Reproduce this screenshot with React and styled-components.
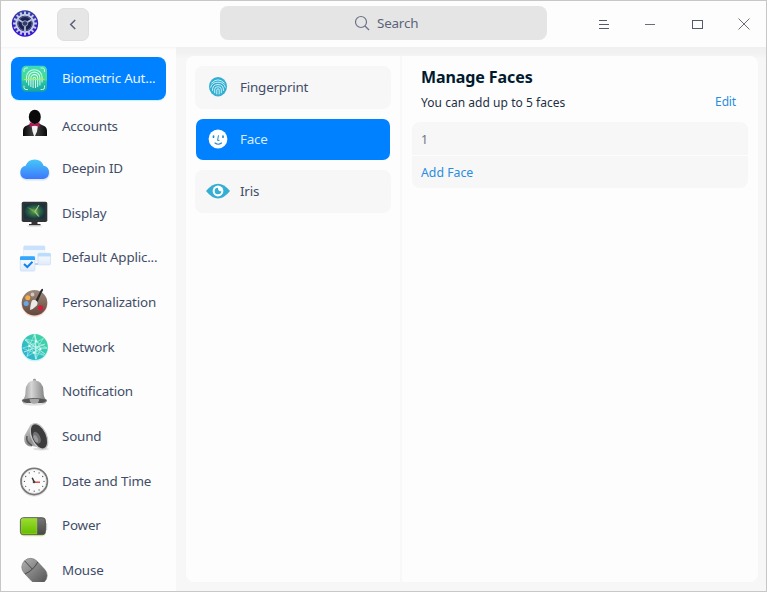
import React from 'react';
import styled, { createGlobalStyle, css } from 'styled-components';

const GlobalStyle = createGlobalStyle`
  * { box-sizing: border-box; }
  body { margin: 0; background: #fdfdfd; }
`;

const Window = styled.div`
  width: 767px;
  height: 592px;
  border: 1px solid #c8c7c8;
  background: #fdfdfd;
  display: flex;
  flex-direction: column;
  overflow: hidden;
  font-family: 'Noto Sans', sans-serif;
  font-size: 13.4px;
  letter-spacing: -0.19px;
  color: #414d68;
`;

const TitleBar = styled.header`
  height: 46px;
  flex: none;
  display: flex;
  align-items: flex-start;
  padding-left: 9px;
`;

const Logo = styled.svg`
  width: 30px;
  height: 30px;
  margin-top: 8px;
  flex: none;
`;

const BackButton = styled.button`
  width: 32px;
  height: 33px;
  margin: 7px 0 0 17px;
  padding: 0;
  border: 1px solid #dfdfdf;
  border-radius: 7px;
  background: #e6e6e6;
  display: flex;
  align-items: center;
  justify-content: center;
`;

const SearchBox = styled.div`
  width: 327px;
  height: 34px;
  margin: 5px 0 0 131px;
  border-radius: 8px;
  background: #e5e5e5;
  display: flex;
  align-items: center;
  padding-left: 134px;
  gap: 7px;
  color: #5a6379;
`;

const Controls = styled.div`
  display: flex;
  gap: 26.7px;
  margin: 13px 0 0 46.7px;

  svg { width: 20px; height: 20px; display: block; }
`;

const Body = styled.div`
  flex: 1;
  min-height: 0;
  display: flex;
`;

const Sidebar = styled.nav`
  width: 175px;
  flex: none;
  padding: 10px 10px 0;
  margin-bottom: 9px;
  overflow: hidden;
  box-shadow: inset 0 3px 3px -2px #f3f3f3;
`;

const NavItem = styled.div`
  height: ${(p) => p.$height || 44.7}px;
  margin-bottom: ${(p) => p.$after || 0}px;
  padding-left: 6px;
  display: flex;
  align-items: center;
  white-space: nowrap;
  border-radius: 8px;
  ${(p) => p.$active && css`
    width: 155px;
    background: #0081ff;
    color: #e9f4ff;
    box-shadow: 0 1px 1px #c3f3ff;
  `}

  svg { width: 36px; height: 36px; flex: none; margin-right: 9px; }
`;

const NavLabel = styled.span`
  padding-bottom: 1.4px;
`;

const Content = styled.main`
  flex: 1;
  background: linear-gradient(#f0f0f0, #f2f2f2 7px, #f7f7f7 12px);
  padding: 9px 9px 9px 10px;
`;

const Panel = styled.div`
  height: 526px;
  display: flex;
  background: #fdfdfd;
  border-radius: 8px;
`;

const MethodList = styled.div`
  width: 216px;
  flex: none;
  border-right: 2px solid #f8f8f8;
  padding: 10px 9px;
  display: flex;
  flex-direction: column;
  gap: 9.5px;
`;

const Method = styled.div`
  height: 42.6px;
  width: 196px;
  display: flex;
  align-items: center;
  padding-left: 10px;
  gap: 9px;
  border-radius: 8px;
  background: #f7f7f7;
  ${(p) => p.$active && css`
    background: #0081ff;
    background-clip: padding-box;
    border: 1px solid transparent;
    padding-left: 9px;
    color: #d9ecff;
  `}

  svg { width: 26px; height: 26px; flex: none; }
`;

const Details = styled.section`
  flex: 1;
  padding: 10px 10px 0 10px;
`;

const Title = styled.h1`
  margin: 0 0 0 9px;
  font-size: 16px;
  line-height: 22px;
  font-weight: 700;
  letter-spacing: -0.09px;
  color: #001a2e;
`;

const SubHeader = styled.div`
  display: flex;
  justify-content: space-between;
  align-items: baseline;
  padding: 0 12px 0 9px;
  margin-top: 6px;
  height: 28px;
  line-height: 18px;
  font-size: 12px;
  letter-spacing: 0.04px;
  color: #1d2f44;
`;

const Link = styled.span`
  color: #2a8de0;
`;

const EditLink = styled(Link)`
  margin-bottom: 1px;
  align-self: flex-start;
  line-height: 16px;
  letter-spacing: -0.15px;
`;

const FaceList = styled.div`
  display: flex;
  flex-direction: column;
  gap: 1px;
  width: 336px;
  border-radius: 8px;
  overflow: hidden;
`;

const FaceRow = styled.div`
  height: ${(p) => p.$height}px;
  padding: 1.5px 9px 0;
  display: flex;
  align-items: center;
  background: #f7f7f7;
  font-size: 12.3px;
  letter-spacing: 0;
  color: #6b7386;
`;

const polar = (cx, cy, r, deg) => [
  cx + r * Math.cos((deg * Math.PI) / 180),
  cy + r * Math.sin((deg * Math.PI) / 180),
];

const GearLogo = () => (
  <Logo viewBox="0 0 30 30">
    <defs>
      <linearGradient id="gearBg" x1="0" y1="0" x2="0" y2="1">
        <stop offset="0" stopColor="#3340a0" />
        <stop offset="1" stopColor="#3a10d8" />
      </linearGradient>
    </defs>
    <circle cx="15" cy="14.5" r="13.2" fill="url(#gearBg)" />
    {Array.from({ length: 16 }, (_, i) => (
      <rect key={i} x="14" y="2.6" width="2" height="4" fill="#c5cce6" transform={`rotate(${i * 22.5} 15 14.5)`} />
    ))}
    <circle cx="15" cy="14.5" r="8.7" fill="#1d2350" stroke="#c5cce6" strokeWidth="2" />
    <circle cx="15" cy="14.5" r="7" fill="none" stroke="#5961a0" strokeWidth="1" />
    {[0, 120, 240].map((a) => (
      <path key={a} d="M15 14.5v8" stroke="#b8bfdd" strokeWidth="1.7" transform={`rotate(${a} 15 14.5)`} />
    ))}
    <circle cx="15" cy="14.5" r="2.7" fill="#343b66" stroke="#9ca4cb" strokeWidth="1" />
  </Logo>
);

const BiometricIcon = () => (
  <svg viewBox="0 0 36 36" fill="none" strokeLinecap="round">
    <defs>
      <linearGradient id="bioBg" x1="0" y1="0" x2="0" y2="1">
        <stop offset="0" stopColor="#3ddbb6" />
        <stop offset=".55" stopColor="#4ed98d" />
        <stop offset=".58" stopColor="#2fc4a2" />
        <stop offset="1" stopColor="#16a5a1" />
      </linearGradient>
    </defs>
    <rect x="4.5" y="4.8" width="25.5" height="26" rx="4.5" fill="url(#bioBg)" />
    <path d="M7 10.5V9q0-2 2-2h1.5M24 7h1.5q2 0 2 2v1.5M7 25v1.5q0 2 2 2h1.5M24 28.500h1.500q2 0 2-2V25" stroke="#c9f7e9" />
    <path d="M9.500 21v-4.500a7.800 7.800 0 0 1 15.600 0V21M11.700 24v-7.300a5.600 5.600 0 0 1 11.200 0V24M13.900 25.500v-8.500a3.400 3.400 0 0 1 6.800 0v8.500M16.100 26.500v-9a1.200 1.200 0 0 1 2.400 0v9" stroke="#d5faea" strokeWidth="1.05" />
    <path d="M7.500 18.500h19.500" stroke="#a5ef68" strokeWidth=".9" />
  </svg>
);

const AccountsIcon = () => (
  <svg viewBox="0 0 36 36">
    <defs>
      <linearGradient id="suit" x1="0" y1="0" x2="1" y2="0">
        <stop offset="0" stopColor="#050505" />
        <stop offset=".35" stopColor="#3a3a3a" />
        <stop offset=".65" stopColor="#333" />
        <stop offset="1" stopColor="#080808" />
      </linearGradient>
    </defs>
    <path d="M6 27v-5q0-4.500 4-5.500l4-2h8l4 2q4 1 4 5.500v5z" fill="url(#suit)" />
    <path d="M14.500 16.500h6.500l-1 6-2 4.500h-1l-1.500-4.500z" fill="#f3f0f1" />
    <ellipse cx="17.800" cy="7.900" rx="6" ry="7.200" fill="#090909" />
    <path d="M12.700 13.300l5 1.900 4.800-1.900v4.700l-4.800-1.500-5 1.500z" fill="#b71557" />
  </svg>
);

const CloudIcon = () => (
  <svg viewBox="0 0 36 36">
    <defs>
      <linearGradient id="cloud" x1="0" y1="0" x2="0" y2="1">
        <stop offset="0" stopColor="#45c8f8" />
        <stop offset="1" stopColor="#3d78fb" />
      </linearGradient>
    </defs>
    <path d="M9 29.500a7 7 0 0 1-.5-13.800 9.800 9.800 0 0 1 18.300-.4 7.200 7.200 0 0 1 .2 14.200z" fill="#bdd8ff" opacity=".6" />
    <path d="M9 27.900a6.700 6.700 0 0 1-.3-13.200 9.500 9.500 0 0 1 17.900 0 6.700 6.700 0 0 1-.3 13.200z" fill="url(#cloud)" />
  </svg>
);

const DisplayIcon = () => (
  <svg viewBox="0 0 36 36">
    <defs>
      <radialGradient id="screen">
        <stop offset="0" stopColor="#5fa04d" />
        <stop offset=".6" stopColor="#2a6148" />
        <stop offset="1" stopColor="#19343f" />
      </radialGradient>
    </defs>
    <rect x="4.700" y="6.700" width="25.600" height="20.300" rx="1.800" fill="#303434" />
    <rect x="7" y="8.800" width="21" height="15.200" fill="url(#screen)" />
    <path d="M10 12l8 3 4-5-2 6 3 6-5.500-4z" fill="#82b84c" opacity=".6" />
    <path d="M22 10l-4 6.500 3.500 5" fill="none" stroke="#b5d29a" strokeWidth=".9" />
    <path d="M14.500 27h6v2h3v1.300H12V29h2.500z" fill="#343434" />
    <ellipse cx="17.500" cy="31" rx="8" ry=".7" fill="#bbb" opacity=".5" />
  </svg>
);

const DefaultAppsIcon = () => (
  <svg viewBox="0 0 36 36">
    <defs>
      <linearGradient id="paper" x1="0" y1="0" x2="0" y2="1">
        <stop offset="0" stopColor="#fbfdff" />
        <stop offset="1" stopColor="#dfebfa" />
      </linearGradient>
    </defs>
    <rect x="6.500" y="6" width="21.500" height="15" rx="1.200" fill="#f3f8ff" stroke="#e2edfb" strokeWidth=".6" />
    <path d="M6.500 10V7q0-1.200 1.200-1.200h19q1.300 0 1.300 1.200v3z" fill="#c9e1fb" />
    <path d="M18 24h3.500" stroke="#a8c3e2" strokeWidth="1.500" />
    <rect x="21" y="13.300" width="12.500" height="11.500" rx="1.200" fill="url(#paper)" stroke="#cfdff2" strokeWidth=".8" />
    <path d="M20.700 16.500v-2q0-1.500 1.300-1.500h10.500q1.300 0 1.300 1.500v2z" fill="#bcdcfc" />
    <rect x="3.300" y="16.500" width="14.500" height="14.500" rx="1" fill="url(#paper)" stroke="#c8dff8" strokeWidth=".8" />
    <path d="M3 20v-2.500q0-1.200 1.200-1.200h12.500q1.300 0 1.300 1.200V20z" fill="#35a7fb" />
    <path d="M7 24l3.300 3 5.200-5.300" fill="none" stroke="#1681ed" strokeWidth="2" />
  </svg>
);

const PaletteIcon = () => (
  <svg viewBox="0 0 36 36">
    <defs>
      <linearGradient id="wood" x1="0" y1="0" x2="0" y2="1">
        <stop offset="0" stopColor="#a08a7c" />
        <stop offset="1" stopColor="#62473c" />
      </linearGradient>
    </defs>
    <circle cx="17.500" cy="19" r="13" fill="#ffb9a5" opacity=".55" />
    <circle cx="17.500" cy="17.700" r="12.800" fill="url(#wood)" />
    <circle cx="15.500" cy="9.500" r="1.900" fill="#d1c7c0" />
    <circle cx="10.800" cy="12.700" r="2.500" fill="#f0ae45" />
    <circle cx="9.200" cy="18.500" r="2.500" fill="#68a8e7" />
    <circle cx="23.500" cy="22.800" r="2.600" fill="#d51b37" />
    <path d="M18.500 15.500L23.500 5.500q1.500-2.500 2.500-1.200.5 1-1 2.800L20.500 17z" fill="#2b2b2b" />
    <path d="M15 15.500q3-1.800 5.200 1.300 1.200 2.700-1.500 4.700-2 2.300-5.700 3.500.5-6.500 2-9.500z" fill="#ede9e5" />
  </svg>
);

const NetworkIcon = () => {
  const outer = [5, 42, 85, 130, 175, 220, 268, 315].map((d) => polar(17.8, 18, 12.3, d));
  const inner = [20, 100, 190, 280].map((d) => polar(18, 18, 5.8, d));
  return (
    <svg viewBox="0 0 36 36">
      <defs>
        <linearGradient id="globe" x1="1" y1="0" x2="0" y2="1">
          <stop offset="0" stopColor="#45dc9a" />
          <stop offset="1" stopColor="#25acd8" />
        </linearGradient>
      </defs>
      <circle cx="17.800" cy="19" r="13.400" fill="#a4edf2" opacity=".55" />
      <circle cx="17.800" cy="18" r="13" fill="url(#globe)" />
      <g stroke="#dcfff5" strokeWidth=".55" opacity=".85">
        {outer.map(([x, y], i) => inner.map(([a, b], j) => (
          (i + j) % 3 !== 1 && <line key={`${i}-${j}`} x1={x} y1={y} x2={a} y2={b} />
        )))}
        <path d="M18 5l1 25M7 23l21-8M8 11l20 14" fill="none" strokeWidth=".9" />
      </g>
      {inner.map(([x, y]) => <circle key={x} cx={x} cy={y} r="1.1" fill="#edfff9" />)}
    </svg>
  );
};

const BellIcon = () => (
  <svg viewBox="0 0 36 36">
    <defs>
      <linearGradient id="bell" x1="0" y1="0" x2="1" y2="0">
        <stop offset="0" stopColor="#8a8a8a" />
        <stop offset=".38" stopColor="#d6d6d6" />
        <stop offset="1" stopColor="#757575" />
      </linearGradient>
    </defs>
    <ellipse cx="17.300" cy="29.500" rx="11.500" ry="2" fill="#ccc" opacity=".6" />
    <rect x="16" y="4.700" width="3" height="3" rx="1.200" fill="#999" />
    <path d="M5 26.500q3.500-2.500 3.500-9Q8.500 7 17.400 6.300 26.500 7 26.500 17.500q0 6.500 3.300 9-1 2.500-5 2.500H10q-4 0-5-2.500z" fill="url(#bell)" />
    <path d="M5 25.800q12-3.500 24.800 0 0 3.200-3.800 3.200H9q-4 0-4-3.200z" fill="#555" />
    <path d="M12.500 25.200q5-1 9.800 0-.5 4.500-5 4.500-4.300 0-4.800-4.500z" fill="#a7a7a7" />
    <path d="M5.300 26.500q1 2.500 4 2.700M29.500 26.500q-1 2.500-4 2.700" fill="none" stroke="#aaa" strokeWidth=".7" />
  </svg>
);

const SoundIcon = () => (
  <svg viewBox="0 0 36 36">
    <defs>
      <linearGradient id="horn" x1="0" y1="0" x2="1" y2="1">
        <stop offset="0" stopColor="#ddd" />
        <stop offset=".5" stopColor="#8a8a8a" />
        <stop offset="1" stopColor="#e2e2e2" />
      </linearGradient>
    </defs>
    <ellipse cx="24" cy="30" rx="8" ry="1.500" fill="#ccc" opacity=".6" />
    <path d="M7.500 16.500L14 5l14 25-12.500-3q-2 1.300-5-.5-4.500-3-3-10z" fill="url(#horn)" />
    <path d="M10 17q-1.500 6 5 9.500" fill="none" stroke="#555" strokeWidth="1.500" />
    <ellipse cx="22" cy="17.300" rx="7.500" ry="13.500" transform="rotate(-24 22 17.300)" fill="#3c3c3c" stroke="#c5c5c5" strokeWidth="1.300" />
    <ellipse cx="19.800" cy="18.700" rx="3.400" ry="6.200" transform="rotate(-24 19.800 18.700)" fill="#707172" />
    <ellipse cx="18.800" cy="19.700" rx="1.900" ry="3.900" transform="rotate(-24 18.800 19.700)" fill="#98999c" />
  </svg>
);

const ClockIcon = () => (
  <svg viewBox="0 0 36 36">
    <circle cx="17.200" cy="19.500" r="14" fill="#bbb" opacity=".45" />
    <circle cx="17.200" cy="18.400" r="13.100" fill="#fbfbfb" stroke="#777" strokeWidth="1.800" />
    <circle cx="17.200" cy="18.400" r="11.900" fill="none" stroke="#ddd" strokeWidth=".7" />
    {Array.from({ length: 12 }, (_, i) => {
      const [x, y] = polar(17.2, 18.4, 9.8, i * 30);
      return <circle key={i} cx={x} cy={y} r=".65" fill="#555" />;
    })}
    <path d="M17.200 19l-2-4.300" stroke="#333" strokeWidth="1.500" />
    <path d="M16.800 19.200H23" stroke="#e53c35" strokeWidth="1.400" />
    <circle cx="17" cy="19" r="1.300" fill="#444" />
  </svg>
);

const PowerIcon = () => (
  <svg viewBox="0 0 36 36">
    <defs>
      <linearGradient id="charge" x1="0" y1="0" x2="0" y2="1">
        <stop offset="0" stopColor="#9add2f" />
        <stop offset="1" stopColor="#66bd00" />
      </linearGradient>
      <linearGradient id="cell" x1="0" y1="0" x2="0" y2="1">
        <stop offset="0" stopColor="#777" />
        <stop offset="1" stopColor="#484848" />
      </linearGradient>
    </defs>
    <rect x="3.300" y="11" width="25.500" height="17.500" rx="4" fill="#e5f4ba" />
    <rect x="27.500" y="15" width="2.700" height="7.500" rx="1" fill="#c9c9c9" />
    <rect x="3.400" y="9.700" width="25" height="17" rx="3" fill="url(#cell)" stroke="#4b5140" strokeWidth=".9" />
    <path d="M6 10.500h13.800v15.400H6q-1.800 0-1.800-1.800V12.300q0-1.800 1.800-1.800z" fill="url(#charge)" stroke="#b2ea47" strokeWidth=".5" />
  </svg>
);

const MouseIcon = () => (
  <svg viewBox="0 0 36 36">
    <defs>
      <linearGradient id="mouse" x1="0" y1="0" x2="0" y2="1">
        <stop offset="0" stopColor="#a8a8a8" />
        <stop offset="1" stopColor="#595959" />
      </linearGradient>
    </defs>
    <g transform="rotate(-43 17.300 18.500)">
      <rect x="8.800" y="4" width="17.500" height="29" rx="8.700" fill="url(#mouse)" stroke="#777" strokeWidth=".6" />
      <path d="M8.800 14q8.700 3 17.500 0M17.500 4v11.500" fill="none" stroke="#454545" strokeWidth=".9" />
    </g>
  </svg>
);

const FingerprintGlyph = () => (
  <svg viewBox="0 0 26 26" fill="none" strokeLinecap="round">
    <ellipse cx="13" cy="12.700" rx="9" ry="9.700" fill="#34aed2" />
    <path d="M6.700 9q6.300-6.500 12.600 0M5.700 13.200q1.300-5 7.300-5t7.300 5M7.500 16.500q-.3-6 5.500-6t5.500 6M9.700 18.800v-3.500q0-2.600 3.300-2.600t3.300 2.600v3.500M11.800 20v-4.200q0-1 1.200-1t1.200 1V20" stroke="#d3f3fa" strokeWidth=".95" />
  </svg>
);

const FaceGlyph = () => (
  <svg viewBox="0 0 26 26" fill="none" stroke="#238aca" strokeLinecap="round">
    <circle cx="13" cy="13" r="9.400" fill="#fff" stroke="none" />
    <path d="M8.500 10v1.200M18 10v1.200" strokeWidth="1.700" />
    <path d="M13.400 9.700l-.8 4.700h1.500" strokeWidth="1" />
    <path d="M10 17q3.200 2.500 6.500 0" strokeWidth="1.200" />
  </svg>
);

const IrisGlyph = () => (
  <svg viewBox="0 0 26 26">
    <path d="M1 13Q7 5.700 13 5.700T25 13q-6 7.500-12 7.500T1 13z" fill="#35aed3" />
    <circle cx="13" cy="13" r="5.400" fill="#fff" />
    <path d="M13 9.700a3.300 3.300 0 1 0 3.300 3.300q-3.300 1-3.300-3.300z" fill="#35aed3" />
  </svg>
);

const navItems = [
  { label: 'Biometric Aut...', icon: BiometricIcon, active: true, height: 43, after: 7.4 },
  { label: 'Accounts', icon: AccountsIcon, height: 38.8 },
  { label: 'Deepin ID', icon: CloudIcon },
  { label: 'Display', icon: DisplayIcon },
  { label: 'Default Applic...', icon: DefaultAppsIcon },
  { label: 'Personalization', icon: PaletteIcon },
  { label: 'Network', icon: NetworkIcon },
  { label: 'Notification', icon: BellIcon },
  { label: 'Sound', icon: SoundIcon },
  { label: 'Date and Time', icon: ClockIcon },
  { label: 'Power', icon: PowerIcon },
  { label: 'Mouse', icon: MouseIcon },
];

const methods = [
  { label: 'Fingerprint', icon: FingerprintGlyph },
  { label: 'Face', icon: FaceGlyph, active: true },
  { label: 'Iris', icon: IrisGlyph },
];

export default function App() {
  return (
    <Window>
      <GlobalStyle />
      <TitleBar>
        <GearLogo />
        <BackButton aria-label="Back">
          <svg width="12" height="14" viewBox="0 0 12 14" fill="none" stroke="#5c6272" strokeWidth="1.500">
            <path d="M8.200 2L3.700 6.500l4.500 4.500" />
          </svg>
        </BackButton>
        <SearchBox>
          <svg width="16" height="16" viewBox="0 0 16 16" fill="none" stroke="#6b7285" strokeWidth="1.200">
            <circle cx="7" cy="7" r="5.500" />
            <path d="M11 11l4 4" />
          </svg>
          Search
        </SearchBox>
        <Controls>
          <svg viewBox="0 0 20 20" stroke="#555a6b" shapeRendering="crispEdges">
            <path d="M5 6.500h8M5 10.500h10M5 14.500h10" />
          </svg>
          <svg viewBox="0 0 20 20" stroke="#696d78" shapeRendering="crispEdges">
            <path d="M5 10.500h10" />
          </svg>
          <svg viewBox="0 0 20 20" stroke="#555a6b" fill="none" shapeRendering="crispEdges">
            <path d="M5.500 6.500h10v8h-10z" />
          </svg>
          <svg viewBox="0 0 20 20" stroke="#696d78" strokeWidth="1">
            <path d="M4.500 4.500l11 11M15.500 4.500l-11 11" />
          </svg>
        </Controls>
      </TitleBar>
      <Body>
        <Sidebar>
          {navItems.map(({ label, icon: Icon, active, height, after }) => (
            <NavItem key={label} $active={active} $height={height} $after={after}>
              <Icon />
              <NavLabel>{label}</NavLabel>
            </NavItem>
          ))}
        </Sidebar>
        <Content>
          <Panel>
            <MethodList>
              {methods.map(({ label, icon: Icon, active }) => (
                <Method key={label} $active={active}>
                  <Icon />
                  {label}
                </Method>
              ))}
            </MethodList>
            <Details>
              <Title>Manage Faces</Title>
              <SubHeader>
                <span>You can add up to 5 faces</span>
                <EditLink>Edit</EditLink>
              </SubHeader>
              <FaceList>
                <FaceRow $height={33}>1</FaceRow>
                <FaceRow $height={32}><Link>Add Face</Link></FaceRow>
              </FaceList>
            </Details>
          </Panel>
        </Content>
      </Body>
    </Window>
  );
}
